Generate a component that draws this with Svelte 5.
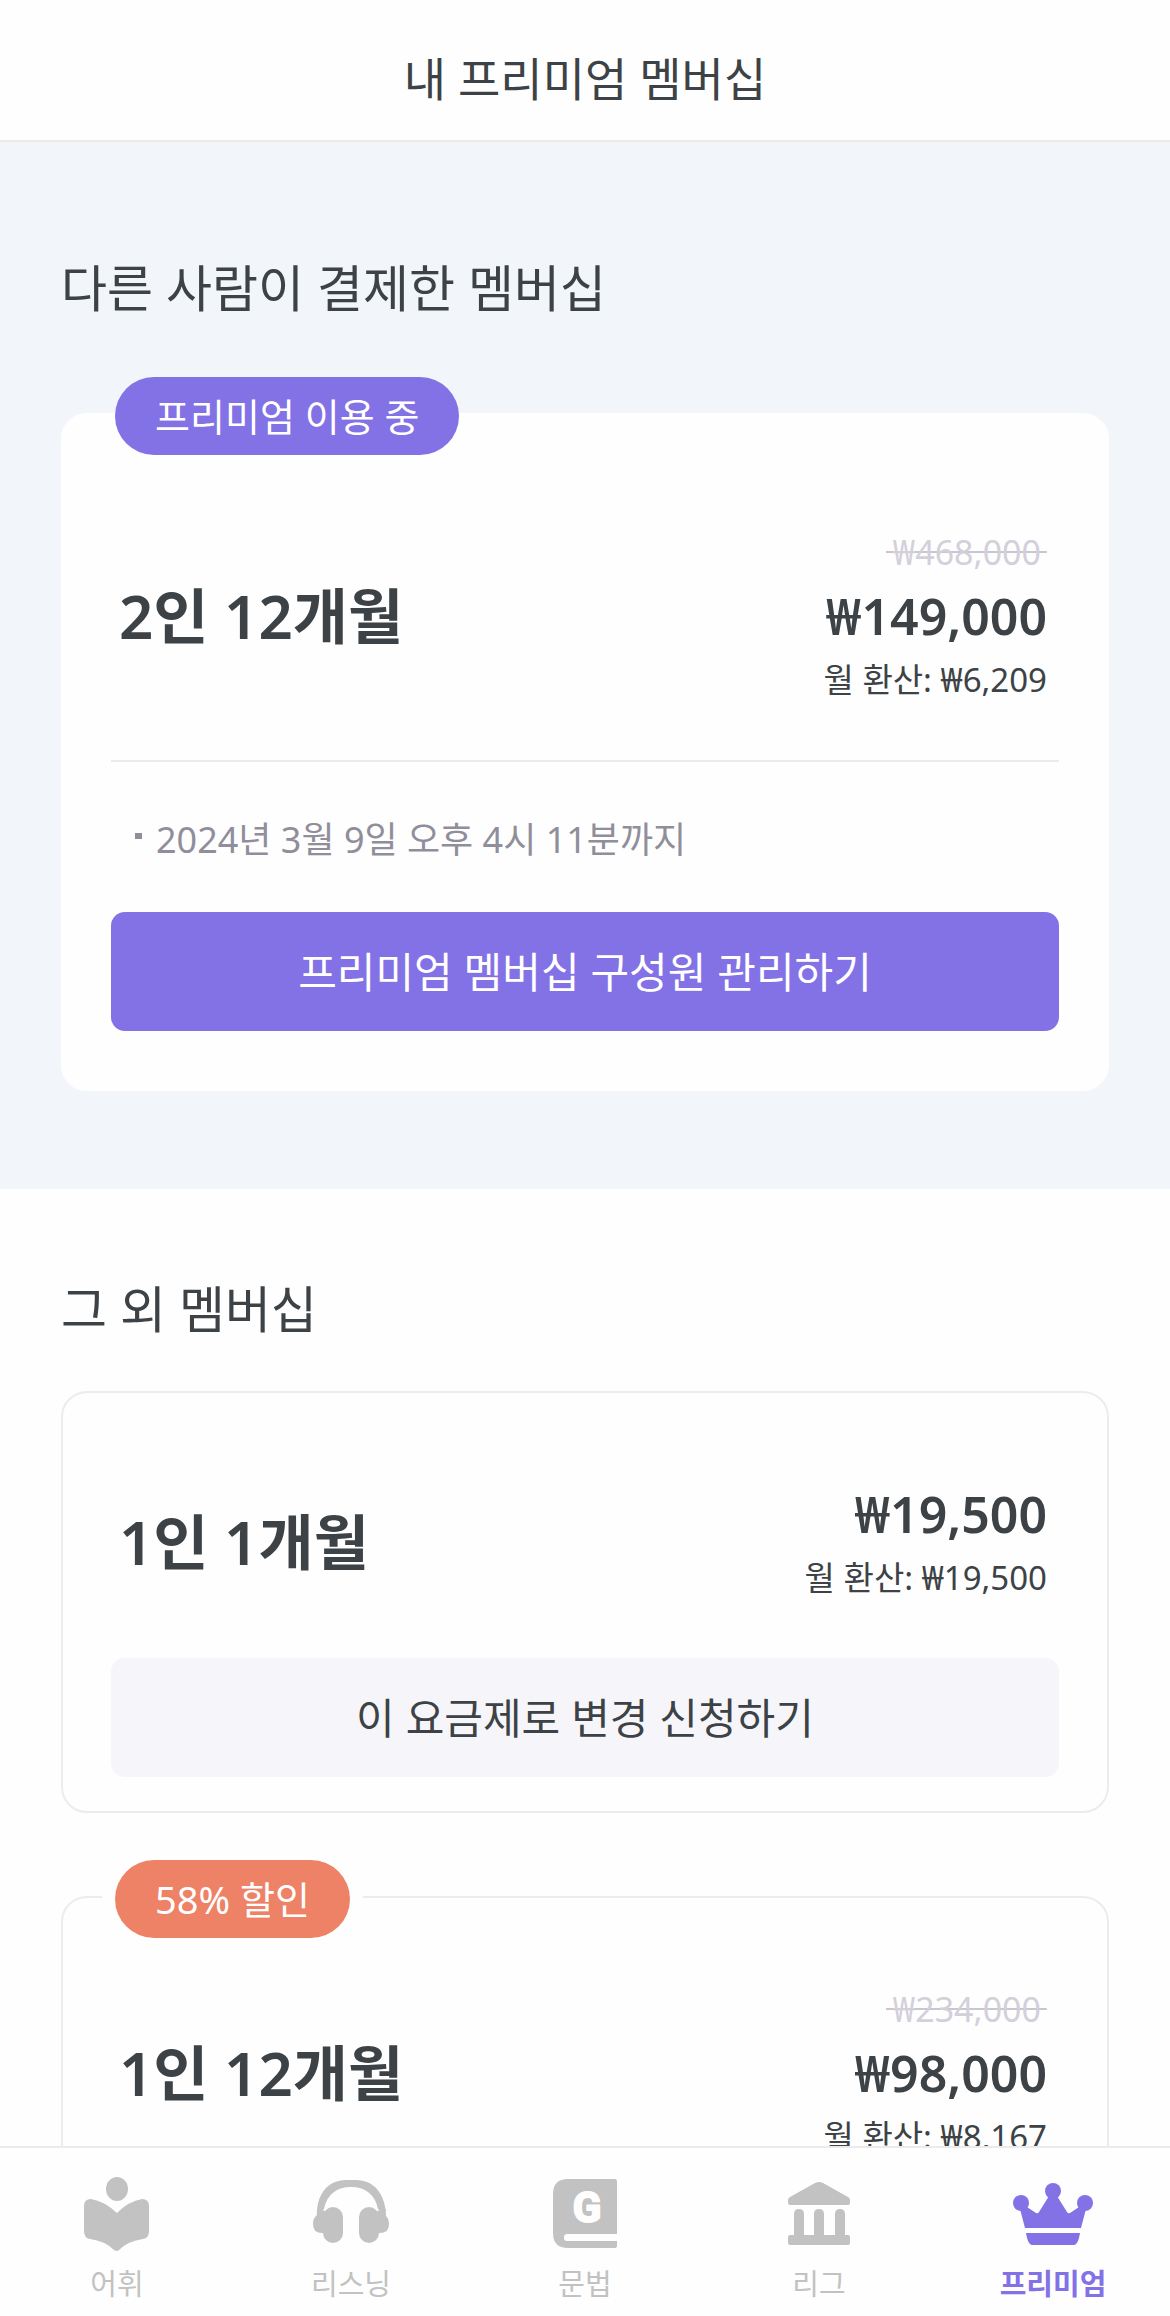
<script>
  const currentPlan = {
    name: '2인 12개월',
    badge: '프리미엄 이용 중',
    originalPrice: '₩468,000',
    price: '₩149,000',
    monthly: '₩6,209',
    until: '2024년 3월 9일 오후 4시 11분까지'
  }

  const otherPlans = [
    {
      name: '1인 1개월',
      price: '₩19,500',
      monthly: '₩19,500',
      action: '이 요금제로 변경 신청하기'
    },
    {
      name: '1인 12개월',
      badge: '58% 할인',
      originalPrice: '₩234,000',
      price: '₩98,000',
      monthly: '₩8,167'
    }
  ]

  const tabs = [
    { id: 'vocab', label: '어휘' },
    { id: 'listening', label: '리스닝' },
    { id: 'grammar', label: '문법' },
    { id: 'league', label: '리그' },
    { id: 'premium', label: '프리미엄' }
  ]

  let activeTab = $state('premium')
</script>

{#snippet planRow(plan)}
  <div class="plan-row">
    <h3>{plan.name}</h3>
    <div class="prices">
      {#if plan.originalPrice}
        <s class="original">{plan.originalPrice}</s>
      {/if}
      <strong class="price">{plan.price}</strong>
      <span class="monthly">월 환산: {plan.monthly}</span>
    </div>
  </div>
{/snippet}

<div class="screen">
  <header>
    <h1>내 프리미엄 멤버십</h1>
  </header>

  <main>
    <section class="current">
      <h2>다른 사람이 결제한 멤버십</h2>
      <article class="card active">
        <span class="badge">{currentPlan.badge}</span>
        {@render planRow(currentPlan)}
        <hr />
        <ul>
          <li>{currentPlan.until}</li>
        </ul>
        <button type="button" class="primary">프리미엄 멤버십 구성원 관리하기</button>
      </article>
    </section>

    <section class="others">
      <h2>그 외 멤버십</h2>
      <div class="plan-list">
        {#each otherPlans as plan}
          <article class="card" class:plain={!plan.badge}>
            {#if plan.badge}
              <span class="badge sale">{plan.badge}</span>
            {/if}
            {@render planRow(plan)}
            {#if plan.action}
              <button type="button">{plan.action}</button>
            {/if}
          </article>
        {/each}
      </div>
    </section>
  </main>

  <nav>
    {#each tabs as tab}
      <a
        href="#{tab.id}"
        class:selected={activeTab === tab.id}
        onclick={() => (activeTab = tab.id)}
      >
        <svg viewBox="0 0 84 84" aria-hidden="true">
          {#if tab.id === 'vocab'}
            <ellipse cx="42" cy="18" rx="11" ry="12" />
            <path d="M9 35Q9 28 16 28Q29 30 42 42Q54 30 67 28Q74 28 74 35V60Q74 67 68 68Q53 70 44 79Q42 81 39 79Q30 70 15 68Q9 67 9 60Z" />
          {:else if tab.id === 'listening'}
            <path d="M8 46C7 23 19 9 37 9H47C65 9 77 23 77 46L69 38C66 23 56 16 42 16S18 23 15 38Z" />
            <rect x="14" y="36" width="20" height="36" rx="10" />
            <rect x="50" y="36" width="20" height="36" rx="10" />
            <path d="M8 44Q4 47 4 53Q4 62 13 62H16V40L8 38ZM76 44Q80 47 80 53Q80 62 71 62H68V40L77 38Z" />
          {:else if tab.id === 'grammar'}
            <path d="M25 8H72Q74 8 74 10V63H24Q21 63 21 66V67Q21 70 24 70H74V75Q74 77 72 77H25Q10 77 10 62V23Q10 8 25 8Z" />
            <text x="44" y="51" text-anchor="middle">G</text>
          {:else if tab.id === 'league'}
            <path d="M38 12Q42 10 46 12L71 26Q73 27 73 29V32Q73 34 71 34H13Q11 34 11 32V29Q11 27 13 26Z" />
            <path d="M17 64V43Q17 38 22 38T27 43V64H37V43Q37 38 42 38T47 43V64H58V43Q58 38 63 38T68 43V64H71Q73 64 73 66V72Q73 74 71 74H13Q11 74 11 72V66Q11 64 13 64Z" />
          {:else}
            <circle cx="42" cy="20" r="8" />
            <circle cx="10" cy="32" r="8" />
            <circle cx="74" cy="32" r="8" />
            <path d="M9 38L16 36L25 42Q27 43 28 41L38 25H46L56 41Q57 43 59 42L68 36L75 38L70 57H14Z" />
            <path d="M15 62H69L68 67Q66 74 63 74H21Q18 74 16 67Z" />
          {/if}
        </svg>
        <span>{tab.label}</span>
      </a>
    {/each}
  </nav>
</div>

<style>
  :global(body) {
    margin: 0;
  }

  .screen {
    display: flex;
    flex-direction: column;
    height: 100vh;
    background: #fefefe;
    color: #3c4245;
    font-family: 'Noto Sans', 'Noto Sans CJK KR', sans-serif;
  }

  h1,
  h2,
  h3,
  ul {
    margin: 0;
    padding: 0;
    font-weight: 400;
  }

  header {
    flex: none;
    padding: 42px 0 26px;
    border-bottom: 2px solid #ebebe8;
    text-align: center;
  }

  h1 {
    font-size: 46px;
    line-height: 72px;
  }

  main {
    flex: 1;
    min-height: 0;
    overflow-y: auto;
    scrollbar-width: none;
  }

  section {
    padding: 0 61px;
  }

  h2 {
    font-size: 50px;
    line-height: 72px;
  }

  .current {
    padding-top: 110px;
    padding-bottom: 98px;
    background: #f2f5f9;
  }

  .current h2 {
    margin-bottom: 89px;
  }

  .others {
    padding-top: 84px;
  }

  .others h2 {
    margin-bottom: 46px;
  }

  .plan-list {
    display: flex;
    flex-direction: column;
    gap: 83px;
  }

  .card {
    position: relative;
    padding: 79px 48px 34px;
    border: 2px solid #ececec;
    border-radius: 26px;
    background: #fefefe;
  }

  .card.plain {
    padding-top: 81px;
  }

  .card.plain .prices {
    padding-top: 8px;
  }

  .card.active {
    padding-top: 105px;
    padding-bottom: 58px;
    border-color: #fefefe;
  }

  /* sits on the top edge of the card */
  .badge {
    position: absolute;
    top: -38px;
    left: 52px;
    padding: 0 40px;
    border-radius: 39px;
    background: #8371e6;
    color: #fff;
    font-size: 38px;
    line-height: 78px;
  }

  .badge.sale {
    background: #ee8266;
    box-shadow: -13px 0 #fefefe, 13px 0 #fefefe;
  }

  .plan-row {
    display: flex;
    justify-content: space-between;
    align-items: center;
    margin-bottom: 48px;
    padding: 0 12px 0 8px;
  }

  h3 {
    font-size: 60px;
    font-weight: 600;
    line-height: 72px;
  }

  .prices {
    display: flex;
    flex-direction: column;
    align-items: flex-end;
    line-height: 64px;
  }

  .original {
    padding: 0 6px;
    background: linear-gradient(#c9c5d1, #c9c5d1) center / 100% 2px no-repeat;
    color: #d3d0da;
    font-size: 34px;
    text-decoration: none;
  }

  .price {
    font-size: 50px;
    font-weight: 600;
  }

  .monthly {
    font-size: 33px;
  }

  hr {
    height: 2px;
    margin: 0 0 50px;
    border: 0;
    background: #ebebeb;
  }

  ul {
    margin-bottom: 44px;
    list-style: none;
  }

  li {
    display: flex;
    gap: 14px;
    padding-left: 24px;
    color: #918e9b;
    font-size: 36px;
    line-height: 56px;
  }

  li::before {
    content: '';
    width: 7px;
    height: 6px;
    margin-top: 21px;
    background: #918e9b;
  }

  button {
    display: block;
    width: 100%;
    padding: 0;
    border: 0;
    border-radius: 14px;
    background: #f6f6fa;
    color: inherit;
    font-family: inherit;
    font-size: 42px;
    line-height: 119px;
    cursor: pointer;
  }

  button.primary {
    background: #8371e6;
    color: #fff;
  }

  nav {
    display: flex;
    flex: none;
    padding: 23px 0 10px;
    border-top: 2px solid #ebebeb;
  }

  nav a {
    display: flex;
    flex: 1;
    flex-direction: column;
    align-items: center;
    gap: 6px;
    color: #c2c2c2;
    font-size: 29px;
    line-height: 45px;
    text-decoration: none;
  }

  nav a.selected {
    color: #8371e6;
    font-weight: 700;
  }

  nav svg {
    width: 84px;
    height: 84px;
    fill: currentColor;
  }

  nav text {
    fill: #fefefe;
    stroke: #fefefe;
    stroke-width: 2px;
    stroke-linejoin: round;
    font-family: Roboto, sans-serif;
    font-size: 42px;
    font-weight: 700;
  }
</style>
